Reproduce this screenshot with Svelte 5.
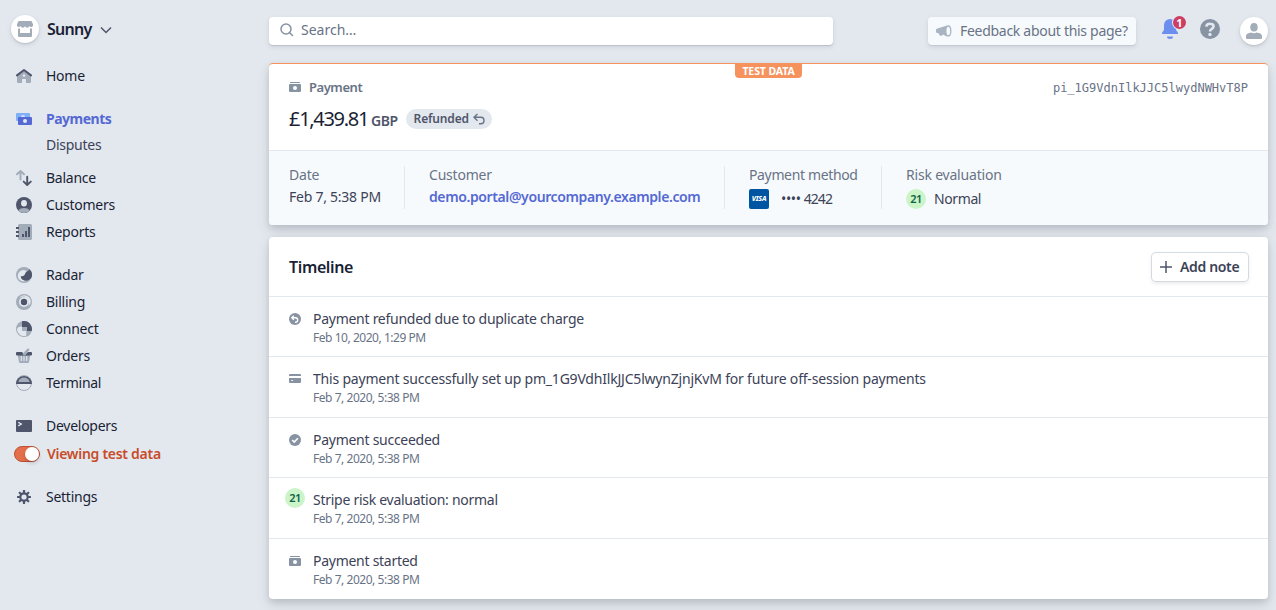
<script>
  const groups = [
    [{ label: 'Home', icon: 'home' }],
    [
      { label: 'Payments', icon: 'payments', active: true },
      { label: 'Disputes', sub: true },
      { label: 'Balance', icon: 'balance' },
      { label: 'Customers', icon: 'customers' },
      { label: 'Reports', icon: 'reports' }
    ],
    [
      { label: 'Radar', icon: 'radar' },
      { label: 'Billing', icon: 'billing' },
      { label: 'Connect', icon: 'connect' },
      { label: 'Orders', icon: 'orders' },
      { label: 'Terminal', icon: 'terminal' }
    ],
    [
      { label: 'Developers', icon: 'developers' },
      { label: 'Viewing test data', toggle: true }
    ],
    [{ label: 'Settings', icon: 'settings' }]
  ];

  const events = [
    { icon: 'refund', text: 'Payment refunded due to duplicate charge', date: 'Feb 10, 2020, 1:29 PM' },
    { icon: 'card', text: 'This payment successfully set up pm_1G9VdhIlkJJC5lwynZjnjKvM for future off-session payments', date: 'Feb 7, 2020, 5:38 PM', long: true },
    { icon: 'check', text: 'Payment succeeded', date: 'Feb 7, 2020, 5:38 PM' },
    { icon: 'risk', text: 'Stripe risk evaluation: normal', date: 'Feb 7, 2020, 5:38 PM' },
    { icon: 'cash', text: 'Payment started', date: 'Feb 7, 2020, 5:38 PM' }
  ];

  const teeth = [0, 45, 90, 135, 180, 225, 270, 315];
</script>

{#snippet navIcon(name)}
  <svg class="nav-icon" viewBox="0 0 16 16" width="16" height="16">
    {#if name === 'home'}
      <path fill="#a3acb9" d="M1 8.2 8 2.8l7 5.4V14a1 1 0 0 1-1 1h-4v-4H6v4H2a1 1 0 0 1-1-1z" />
      <circle cx="8" cy="7.6" r="1.3" fill="#e3e8ee" />
      <path d="M1 7.4 8 2l7 5.4" fill="none" stroke="#4f566b" stroke-width="2" stroke-linecap="round" stroke-linejoin="round" />
    {:else if name === 'payments'}
      <rect x="0" y="2" width="14" height="8" rx="1" fill="#7fb0f8" />
      <path d="M5 6a2 2 0 0 1 4 0z" fill="#d6e4fb" />
      <rect x="2" y="6" width="14" height="8" rx="1" fill="#5469d4" />
      <circle cx="9" cy="10" r="2" fill="#e3e8ee" />
    {:else if name === 'balance'}
      <path d="M4.5 9.5V1.200M1 4.300 4.500 1 8 4.300" fill="none" stroke="#a3acb9" stroke-width="1.900" stroke-linecap="round" stroke-linejoin="round" />
      <path d="M11.200 6.800v8M7.700 11.600l3.500 3.400 3.600-3.400" fill="none" stroke="#4f566b" stroke-width="1.900" stroke-linecap="round" stroke-linejoin="round" />
    {:else if name === 'customers'}
      <circle cx="8" cy="8" r="8" fill="#4f566b" />
      <path d="M2.200 13.500C3.700 11.700 5.700 11 8 11s4.300.700 5.800 2.500A8 8 0 0 1 2.200 13.500z" fill="#a3acb9" />
      <ellipse cx="8" cy="6.300" rx="2.900" ry="3.200" fill="#e3e8ee" />
    {:else if name === 'reports'}
      <rect x="2" y="0" width="14" height="16" rx="1.500" fill="#a3acb9" />
      <path fill="#4f566b" d="M0 3h3v2H0zM0 7h3v2H0zM0 11h3v2H0zM6 10h2v3H6zM9 7h2v6H9zM12 3h2v10h-2z" />
    {:else if name === 'radar'}
      <circle cx="8" cy="8" r="8" fill="#a3acb9" />
      <circle cx="7.500" cy="8.800" r="5.700" fill="#e3e8ee" />
      <path d="M13.600 2.300A8 8 0 0 1 15.600 10.300C14.200 13 11.500 14 9 13.700 6.200 13.200 4.600 11.400 4.800 9.200c1.200.300 2.600 0 3.200-.700C9.300 7.500 8.800 6 10.200 4.900c1.100-.800 2.300-.900 3.400-2.600z" fill="#4f566b" />
    {:else if name === 'billing'}
      <circle cx="8" cy="8" r="8" fill="#a3acb9" />
      <path d="M8 1.200A7 7 0 0 1 14.900 7.500 7.500 7.500 0 0 1 12.500 12 7 7 0 0 0 8.500 2.600 7 7 0 0 0 3 4 7 7 0 0 1 8 1.200z" fill="#e3e8ee" />
      <circle cx="8" cy="8" r="5" fill="#e3e8ee" />
      <circle cx="8" cy="8" r="3.200" fill="#4f566b" />
    {:else if name === 'connect'}
      <circle cx="8" cy="8" r="8" fill="#a3acb9" />
      <path d="M6 5.500V10h4.500v4.400A6.900 6.900 0 0 1 1 8.500C1.200 6.700 3 5.500 6 5.500z" fill="#e3e8ee" />
      <path d="M6 .300A8 8 0 0 1 15.700 10H11V6H6z" fill="#4f566b" />
      <path d="M6 6h5v4h4.500A8 8 0 0 1 10.500 15.600V10H6z" fill="#a3acb9" />
    {:else if name === 'orders'}
      <path d="M1.800 7h12.400l-1.100 6.800A1.400 1.400 0 0 1 11.700 15H4.300a1.400 1.400 0 0 1-1.400-1.200z" fill="#a3acb9" />
      <path d="M5.300 8.500v4M8 8.500v4M10.700 8.500v4" stroke="#e3e8ee" stroke-width="1.200" stroke-linecap="round" />
      <rect x="0" y="4" width="16" height="3.500" rx="1" fill="#4f566b" />
      <path d="M7.500 6 12 1.300" stroke="#e3e8ee" stroke-width="3.600" />
      <path d="M8 6 12.200 1.600" stroke="#a3acb9" stroke-width="2.300" stroke-linecap="round" />
    {:else if name === 'terminal'}
      <circle cx="8" cy="8" r="7.500" fill="#e3e8ee" stroke="#a3acb9" />
      <path d="M0 9a8 8 0 1 1 16 0z" fill="#4f566b" />
      <path d="M2.500 7V6.200C3.500 3.900 5.500 2.600 8 2.600s4.500 1.300 5.500 3.600V7z" fill="#a3acb9" />
    {:else if name === 'developers'}
      <rect x="0" y="2" width="16" height="12" rx="1" fill="#4f566b" />
      <path d="m2.300 4.300 3 1.800-3 1.800" fill="none" stroke="#e3e8ee" stroke-width="1.300" />
    {:else}
      <g fill="#4f566b">
        {#each teeth as angle}
          <rect x="6.900" y="1" width="2.200" height="4" rx=".500" transform="rotate({angle} 8 8)" />
        {/each}
      </g>
      <circle cx="8" cy="8" r="3.700" fill="#e3e8ee" stroke="#4f566b" stroke-width="2.200" />
    {/if}
  </svg>
{/snippet}

{#snippet smallIcon(name)}
  <svg class="small-icon" viewBox="0 0 12 12" width="12" height="12">
    {#if name === 'refund'}
      <circle cx="6" cy="6" r="6" fill="#8792a2" />
      <path d="M4.800 2.700 2.800 4.800l2 2M3 4.800h3.500a2.200 2.200 0 0 1 0 4.400H6" fill="none" stroke="#fff" stroke-width="1.400" />
    {:else if name === 'card'}
      <path d="M0 2a1 1 0 0 1 1-1h10a1 1 0 0 1 1 1v1H0zM0 5h12v4a1 1 0 0 1-1 1H1a1 1 0 0 1-1-1z" fill="#8792a2" />
      <path d="M2 7.500h1" stroke="#cdd3da" />
      <path d="M3 7.500h1" stroke="#fff" />
    {:else if name === 'check'}
      <circle cx="6" cy="6" r="6" fill="#8792a2" />
      <path d="m3.200 6 2 2 3.700-3.800" fill="none" stroke="#fff" stroke-width="1.600" />
    {:else}
      <path d="M1 2V1.500a.500.500 0 0 1 .500-.500h9a.500.500 0 0 1 .500.500V2z" fill="#8792a2" />
      <rect x="0" y="3" width="12" height="8" rx="1" fill="#8792a2" />
      <circle cx="6" cy="7" r="2" fill="#fff" />
    {/if}
  </svg>
{/snippet}

<div class="app">
  <aside>
    <div class="account">
      <span class="round">
        <svg viewBox="0 0 16 16" width="16" height="16" fill="#a3acb9">
          <path d="M1.500 0h13L16 3.300A2 2 0 0 1 14.300 6a2 2 0 0 1-2-1 2.200 2.200 0 0 1-4.300 0 2.200 2.200 0 0 1-4.300 0 2 2 0 0 1-2 1A2 2 0 0 1 0 3.300z" />
          <path d="M1 7.500h2V12h10V7.500h2V15a1 1 0 0 1-1 1H2a1 1 0 0 1-1-1z" />
        </svg>
      </span>
      <strong>Sunny</strong>
      <svg class="chevron" viewBox="0 0 12 8" width="12" height="8"><path d="m1 1.500 5 5 5-5" fill="none" stroke="#4f566b" stroke-width="1.500" /></svg>
    </div>
    <nav>
      {#each groups as group}
        <ul>
          {#each group as item}
            <li class:active={item.active} class:sub={item.sub} class:mode={item.toggle}>
              {#if item.icon}{@render navIcon(item.icon)}{/if}
              {#if item.toggle}<span class="toggle"><span class="knob"></span></span>{/if}
              <span class="label">{item.label}</span>
            </li>
          {/each}
        </ul>
      {/each}
    </nav>
  </aside>

  <main>
    <header class="topbar">
      <div class="search">
        <svg viewBox="0 0 14 14" width="14" height="14"><circle cx="6" cy="6" r="5" fill="none" stroke="#8792a2" stroke-width="1.500" /><path d="m9.700 9.700 2.800 2.800" stroke="#8792a2" stroke-width="1.500" stroke-linecap="round" /></svg>
        <span>Search…</span>
      </div>
      <div class="tools">
        <div class="feedback">
          <svg viewBox="0 0 16 12" width="16" height="12">
            <path d="M11 .500 1.500 3.500A1.500 1.500 0 0 0 0 5v1.500A1.500 1.500 0 0 0 1.500 8L3 8.400V9a2 2 0 0 0 3.800.600L11 11.500z" fill="#a8b4c1" />
            <ellipse cx="12.300" cy="6" rx="2.500" ry="5" fill="#f7fafc" stroke="#a8b4c1" stroke-width="1.300" />
          </svg>
          <span>Feedback about this page?</span>
        </div>
        <div class="bell">
          <svg viewBox="0 0 16 20" width="16" height="20" fill="#6c8eef">
            <path d="M8 0a6 6 0 0 1 6 6v4.500c0 1.200 2 2.500 2 3.500v1H0v-1c0-1 2-2.300 2-3.500V6a6 6 0 0 1 6-6zM5 17.500h6a3 2.500 0 0 1-6 0z" />
          </svg>
          <span class="count">1</span>
        </div>
        <svg class="help" viewBox="0 0 20 20" width="20" height="20">
          <circle cx="10" cy="10" r="10" fill="#8792a2" />
          <path d="M6.300 7.700A3.600 3.300 0 0 1 10 4.800c2.200 0 3.600 1.100 3.600 2.800C13.600 10 10 9.900 10 12.400" fill="none" stroke="#e3e8ee" stroke-width="2.600" />
          <circle cx="10" cy="15.500" r="1.700" fill="#e3e8ee" />
        </svg>
        <span class="round">
          <svg viewBox="0 0 16 16" width="16" height="16" fill="#a3acb9">
            <ellipse cx="8" cy="4.300" rx="3.700" ry="4.300" />
            <path d="M0 15v-2c0-2.200 2.800-3.300 5.200-3.600 1.700 1 3.900 1 5.600 0C13.200 9.700 16 10.800 16 13v2a1 1 0 0 1-1 1H1a1 1 0 0 1-1-1z" />
          </svg>
        </span>
      </div>
    </header>

    <section class="card payment">
      <span class="ribbon">TEST DATA</span>
      <div class="summary">
        <div class="title-row">
          <div class="kind">{@render smallIcon('cash')}<span>Payment</span></div>
          <code>pi_1G9VdnIlkJJC5lwydNWHvT8P</code>
        </div>
        <div class="amount-row">
          <span class="amount">£1,439.81</span>
          <span class="currency">GBP</span>
          <span class="pill">
            <span>Refunded</span>
            <svg viewBox="0 0 12 12" width="12" height="12"><path d="M4.500 1 1 4.300l3.500 3.400M1.300 4.300h6.500a3.200 3.200 0 0 1 0 6.400H6" fill="none" stroke="#697386" stroke-width="1.400" /></svg>
          </span>
        </div>
      </div>
      <dl>
        <div class="fact date"><dt>Date</dt><dd>Feb 7, 5:38 PM</dd></div>
        <div class="fact customer"><dt>Customer</dt><dd class="email">demo.portal@yourcompany.example.com</dd></div>
        <div class="fact method"><dt>Payment method</dt><dd class="tall"><span class="visa">VISA</span><span class="dots">••••</span><span class="last4">4242</span></dd></div>
        <div class="fact risk"><dt>Risk evaluation</dt><dd class="tall"><span class="score">21</span><span class="normal">Normal</span></dd></div>
      </dl>
    </section>

    <section class="card timeline">
      <div class="timeline-head">
        <h2>Timeline</h2>
        <button>
          <svg viewBox="0 0 12 12" width="12" height="12"><path d="M6 0v12M0 6h12" stroke="#4f566b" stroke-width="1.500" /></svg>
          <span>Add note</span>
        </button>
      </div>
      {#each events as event}
        <article>
          <div class="marker" class:lifted={event.icon === 'risk'}>
            {#if event.icon === 'risk'}<span class="score">21</span>{:else}{@render smallIcon(event.icon)}{/if}
          </div>
          <div class="event">
            <p class:long={event.long}>{event.text}</p>
            <time>{event.date}</time>
          </div>
        </article>
      {/each}
    </section>
  </main>
</div>

<style>
  :global(body) { background: #e3e8ee; }
  .app {
    box-sizing: border-box;
    display: grid;
    grid-template-columns: 269px 999px;
    height: 610px;
    overflow: hidden;
    background: #e3e8ee;
    color: #1a1f36;
    font: 14px/20px "Noto Sans", sans-serif;
    white-space: nowrap;
  }
  svg { display: block; flex: none; }
  .round {
    display: grid;
    place-items: center;
    flex: none;
    width: 28px;
    height: 28px;
    border-radius: 50%;
    background: #fff;
    box-shadow: 0 2px 5px rgba(60, 66, 87, .12), 0 1px 2px rgba(0, 0, 0, .12);
  }
  .account { display: flex; align-items: center; height: 28px; padding: 15px 0 0 11px; }
  .account strong { margin: 0 8px; font-size: 16px; font-weight: 600; letter-spacing: -.7px; }
  .chevron { margin-top: 2px; }
  nav { display: flex; flex-direction: column; gap: 16px; padding-top: 19px; }
  ul { margin: 0; padding: 0; list-style: none; }
  li { display: flex; align-items: center; gap: 14px; height: 27px; padding-left: 16px; letter-spacing: -.26px; }
  .active { color: #5469d4; font-weight: 700; letter-spacing: -.5px; }
  .sub { height: 25px; padding: 0 0 7px 46px; color: #3c4257; }
  .mode { box-sizing: border-box; height: 28px; gap: 7px; padding: 2px 0 0 14px; color: #c84c2b; font-weight: 600; letter-spacing: -.28px; }
  .toggle {
    box-sizing: border-box;
    display: flex;
    justify-content: flex-end;
    width: 26px;
    height: 16px;
    border: 1px solid #bb5237;
    border-radius: 8px;
    background: #e56f4a;
  }
  .knob { width: 14px; height: 14px; border-radius: 50%; background: #fff; box-shadow: 0 2px 4px rgba(0, 0, 0, .2); }

  .topbar { display: flex; justify-content: space-between; height: 28px; padding: 17px 0 18px; }
  .search {
    box-sizing: border-box;
    display: flex;
    align-items: center;
    gap: 7px;
    width: 564px;
    padding: 0 0 2px 11px;
    border-radius: 4px;
    background: #fff;
    color: #697386;
    box-shadow: 0 2px 5px rgba(60, 66, 87, .12), 0 1px 1px rgba(0, 0, 0, .12);
  }
  .tools { display: flex; align-items: center; }
  .feedback {
    box-sizing: border-box;
    display: flex;
    align-items: center;
    gap: 8px;
    width: 208px;
    height: 28px;
    padding-left: 8px;
    border-radius: 4px;
    background: #f7fafc;
    color: #697386;
    letter-spacing: -.29px;
    box-shadow: 0 2px 5px rgba(60, 66, 87, .12), 0 1px 1px rgba(0, 0, 0, .08);
  }
  .bell { position: relative; margin: -4px 22px 0 26px; }
  .count {
    position: absolute;
    top: -3px;
    left: 11px;
    width: 13px;
    height: 13px;
    border-radius: 50%;
    background: #cd3d64;
    box-shadow: 0 0 0 1px #e3e8ee;
    color: #fff;
    font-size: 11px;
    font-weight: 700;
    line-height: 13px;
    text-align: center;
  }
  .help { margin: -4px 20px 0 0; }

  .card {
    position: relative;
    border-radius: 4px;
    background: #fff;
    box-shadow: 0 7px 14px rgba(60, 66, 87, .12), 0 3px 6px rgba(0, 0, 0, .12);
  }
  .payment { box-sizing: border-box; height: 162px; border-top: 1px solid #f5925e; }
  .ribbon {
    position: absolute;
    top: 0;
    left: 466px;
    width: 67px;
    height: 14px;
    border-radius: 0 0 4px 4px;
    background: #f5925e;
    color: #fff;
    font-size: 10.500px;
    font-weight: 700;
    line-height: 14px;
    text-align: center;
    letter-spacing: -.1px;
  }
  .summary { box-sizing: border-box; height: 86px; padding: 14px 20px 0; }
  .title-row, .amount-row, .kind, .pill { display: flex; align-items: center; }
  .title-row { justify-content: space-between; height: 18px; }
  .kind { gap: 8px; color: #697386; font-size: 13px; font-weight: 600; letter-spacing: -.45px; }
  code { padding-top: 2px; color: #697386; font: 12px/18px "DejaVu Sans Mono", monospace; }
  .amount-row { height: 28px; padding-top: 9px; }
  .amount { font-size: 20px; letter-spacing: -1.300px; }
  .currency { margin: 3px 8px 0 3px; color: #4f566b; font-size: 14px; font-weight: 600; letter-spacing: -.5px; }
  .pill { box-sizing: border-box; gap: 4px; width: 86px; height: 20px; padding-left: 8px; border-radius: 10px; background: #e3e8ee; color: #4f566b; font-size: 12px; font-weight: 600; letter-spacing: -.15px; }
  dl { box-sizing: border-box; display: flex; height: 75px; margin: 0; padding: 15px 20px; border-top: 1px solid #e3e8ee; border-radius: 0 0 4px 4px; background: #f7fafc; }
  .fact { box-sizing: border-box; height: 43px; margin-right: 24px; border-right: 1px solid #e3e8ee; }
  .date { width: 116px; }
  .customer { width: 296px; }
  .method { width: 133px; }
  .risk { border: 0; }
  dt { height: 18px; color: #697386; line-height: 18px; letter-spacing: -.2px; }
  .method dt { letter-spacing: -.36px; }
  dd { display: flex; align-items: center; height: 26px; margin: 0; color: #3c4257; letter-spacing: -.25px; }
  .tall { height: 30px; }
  .email { color: #5469d4; font-weight: 600; letter-spacing: -.39px; }
  .visa { width: 20px; height: 20px; margin-right: 12px; border-radius: 2px; background: #0055a2; color: #fff; font-size: 7px; font-style: italic; font-weight: 800; text-align: center; letter-spacing: -.2px; }
  .dots { margin-right: 3px; font-size: 14px; letter-spacing: -.35px; }
  .last4 { letter-spacing: -.9px; }
  .score { width: 20px; height: 20px; border-radius: 50%; background: #cbf4c9; color: #0e6245; font-size: 11px; font-weight: 600; line-height: 20px; text-align: center; letter-spacing: -.6px; }
  .normal { margin-left: 8px; letter-spacing: -.4px; }

  .timeline { height: 362px; margin-top: 12px; }
  .timeline-head { box-sizing: border-box; display: flex; align-items: center; justify-content: space-between; height: 59px; padding: 0 20px; }
  h2 { margin: 0; font-size: 16px; font-weight: 600; letter-spacing: -.37px; }
  button { box-sizing: border-box; display: flex; align-items: center; gap: 8px; width: 96px; height: 28px; margin-top: 1px; padding: 0 0 0 8px; border: 0; border-radius: 4px; background: #fff; box-shadow: 0 0 0 1px #d5dbe1, 0 2px 4px rgba(60, 66, 87, .14); color: #3c4257; font: 600 14px/20px "Noto Sans", sans-serif; letter-spacing: -.35px; }
  article { box-sizing: border-box; display: flex; height: 60.400px; padding: 12px 20px 0 16px; border-top: 1px solid #e3e8ee; }
  .marker { display: grid; place-items: center; width: 20px; height: 20px; margin-right: 8px; }
  .lifted { margin-top: -2px; }
  p { margin: 0; color: #3c4257; font-size: 14px; line-height: 20px; letter-spacing: -.27px; }
  .long { letter-spacing: -.2px; }
  time { display: block; color: #697386; font-size: 12px; line-height: 17px; letter-spacing: -.46px; }
</style>
